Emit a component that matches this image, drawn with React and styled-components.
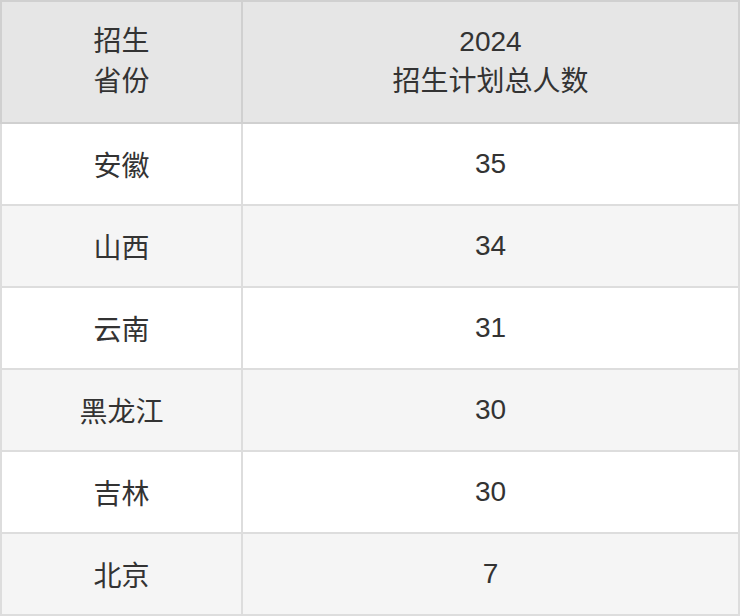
import React from "react";
import styled, { createGlobalStyle } from "styled-components";

const GlobalStyle = createGlobalStyle`
  html, body {
    margin: 0;
    padding: 0;
    background: #ffffff;
  }
  body {
    font-family: "Liberation Sans", Arial, "Noto Sans CJK SC", sans-serif;
    color: #333333;
  }
`;

const Table = styled.table`
  width: 740px;
  border-collapse: collapse;
  table-layout: fixed;
  font-size: 28px;
`;

const HeadCell = styled.th`
  height: 120px;
  padding: 0;
  background: #e6e6e6;
  border: 2px solid #d0d0d0;
  font-weight: normal;
  line-height: 40px;
  text-align: center;
  vertical-align: middle;
`;

const Row = styled.tr`
  background: ${(p) => (p.$alt ? "#f5f5f5" : "#ffffff")};
`;

const Cell = styled.td`
  height: 80px;
  padding: 0;
  border: 2px solid #dddddd;
  text-align: center;
  vertical-align: middle;
`;

const rows = [
  ["安徽", 35],
  ["山西", 34],
  ["云南", 31],
  ["黑龙江", 30],
  ["吉林", 30],
  ["北京", 7],
];

const App = () => {
  return (
    <>
      <GlobalStyle />
      <Table>
        <colgroup>
          <col style={{ width: "241px" }} />
          <col />
        </colgroup>
        <thead>
          <tr>
            <HeadCell>
              招生
              <br />
              省份
            </HeadCell>
            <HeadCell>
              2024
              <br />
              招生计划总人数
            </HeadCell>
          </tr>
        </thead>
        <tbody>
          {rows.map(([name, count], i) => (
            <Row key={name} $alt={i % 2 === 1}>
              <Cell>{name}</Cell>
              <Cell>{count}</Cell>
            </Row>
          ))}
        </tbody>
      </Table>
    </>
  );
};

export default App;
